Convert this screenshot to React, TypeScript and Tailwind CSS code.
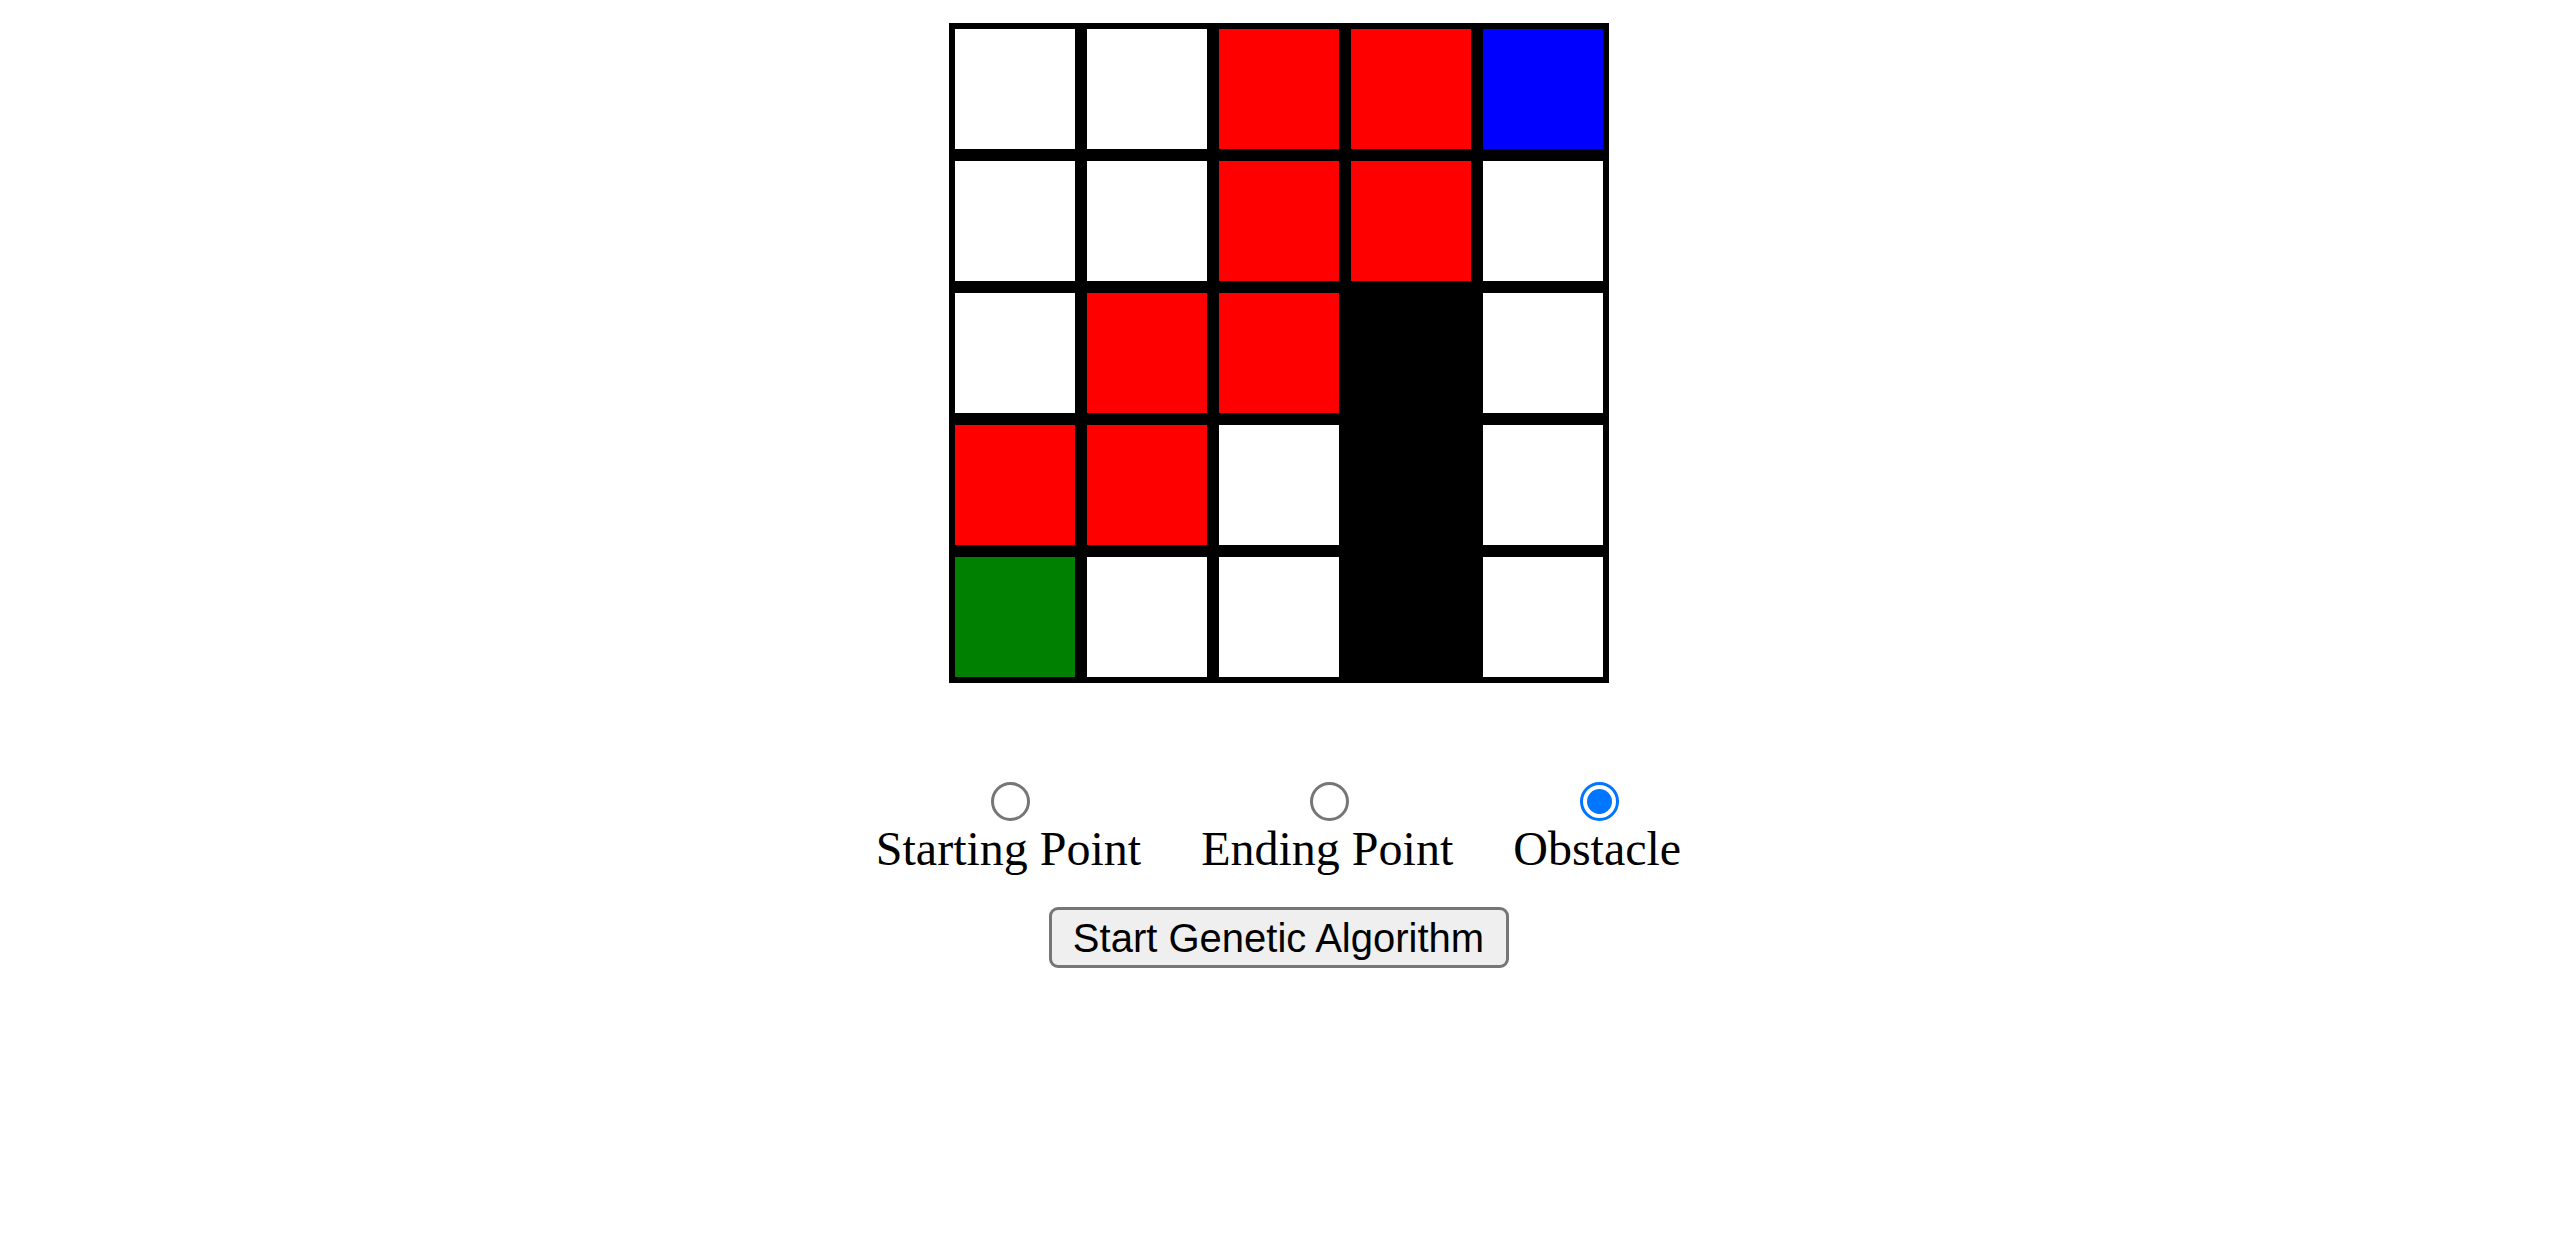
import { useState } from 'react'

const W = 'bg-white'
const R = 'bg-[#ff0000]'
const B = 'bg-[#0000ff]'
const G = 'bg-[#008000]'
const K = 'bg-black'

const cells = [
  [W, W, R, R, B],
  [W, W, R, R, W],
  [W, R, R, K, W],
  [R, R, W, K, W],
  [G, W, W, K, W],
]

const modes = ['Starting Point', 'Ending Point', 'Obstacle']

function Radio({ checked }: { checked: boolean }) {
  if (checked) {
    return (
      <div className="ml-[4px] mt-[9px] flex h-[39px] w-[39px] items-center justify-center rounded-full border-[3px] border-[#0075ff] bg-white">
        <div className="h-[25px] w-[25px] rounded-full bg-[#0075ff]" />
      </div>
    )
  }
  return <div className="ml-[4px] mt-[9px] h-[39px] w-[39px] rounded-full border-[3px] border-[#767676] bg-white" />
}

export default function App() {
  const [mode, setMode] = useState('Obstacle')

  return (
    <div className="flex min-h-screen flex-col items-center bg-white">
      <div className="mt-[23px] grid w-[660px] grid-cols-5">
        {cells.flat().map((c, i) => (
          <div key={i} className={`h-[132px] w-[132px] border-[6px] border-black ${c}`} />
        ))}
      </div>

      <div className="mt-[90px] flex gap-[60px]">
        {modes.map((m) => (
          <label
            key={m}
            onClick={() => setMode(m)}
            className="flex cursor-pointer flex-col items-center"
          >
            <Radio checked={mode === m} />
            <span className="mt-[1px] whitespace-nowrap text-[48px] leading-[53px] text-black [font-family:'Liberation_Serif','Times_New_Roman',serif]">
              {m}
            </span>
          </label>
        ))}
      </div>

      <button className="mt-[32px] flex h-[61px] w-[460px] items-center justify-center rounded-[9px] border-[3px] border-[#767676] bg-[#efefef] text-[40px] text-black [font-family:'Liberation_Sans',Arial,sans-serif]">
        Start Genetic Algorithm
      </button>
    </div>
  )
}
